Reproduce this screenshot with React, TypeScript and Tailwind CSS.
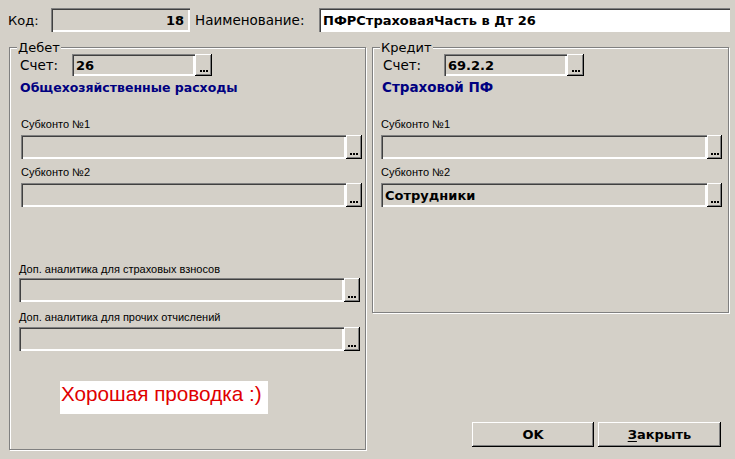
import React from "react";

const sunken =
  "shadow-[inset_1px_1px_0_#808080,inset_2px_2px_0_#404040,inset_-1px_-1px_0_#ffffff,inset_-2px_-2px_0_#ffffff]";
const raised =
  "shadow-[inset_-1px_-1px_0_#000000,inset_1px_1px_0_#ffffff,inset_-2px_-2px_0_#808080]";

function Dots() {
  return (
    <div className="flex gap-[1px]">
      <span className="block w-[2px] h-[2px] bg-black" />
      <span className="block w-[2px] h-[2px] bg-black" />
      <span className="block w-[2px] h-[2px] bg-black" />
    </div>
  );
}

function SelectField({
  fieldW,
  btnW,
  h,
  value,
}: {
  fieldW: number;
  btnW: number;
  h: number;
  value?: string;
}) {
  return (
    <div className="flex" style={{ height: h }}>
      <div
        className={`${sunken} bg-[#d4d0c8] h-full flex items-center pl-[4px] font-bold text-[13px] leading-[15px] text-black overflow-hidden whitespace-nowrap`}
        style={{ width: fieldW }}
      >
        {value}
      </div>
      <div
        className={`${raised} bg-[#d4d0c8] h-full flex items-end justify-center pb-[4px]`}
        style={{ width: btnW }}
      >
        <Dots />
      </div>
    </div>
  );
}

function SmallLabel({ children, cls }: { children: React.ReactNode; cls: string }) {
  return (
    <div
      className={`font-['Liberation_Sans',Arial,sans-serif] text-[11px] leading-[13px] text-black whitespace-nowrap ${cls}`}
    >
      {children}
    </div>
  );
}

function Legend({ children }: { children: React.ReactNode }) {
  return (
    <div className="absolute -top-[8px] left-[7px] bg-[#d4d0c8] px-[1px] text-[13px] leading-[15px] text-black">
      {children}
    </div>
  );
}

export default function App() {
  return (
    <div className="w-[735px] h-[459px] bg-[#d4d0c8] overflow-hidden font-['DejaVu_Sans',sans-serif] text-black">
      {/* top row */}
      <div className="flex items-center pl-[8px] pt-[8px]">
        <div className="w-[43px] text-[13px] leading-[15px]">Код:</div>
        <div
          className={`${sunken} w-[139px] h-[24px] bg-[#d4d0c8] flex items-center justify-end pr-[6px] font-bold text-[13px] leading-[15px]`}
        >
          18
        </div>
        <div className="ml-[5px] w-[124px] text-[13.5px] leading-[15px]">Наименование:</div>
        <div
          className={`${sunken} w-[411px] h-[24px] bg-white flex items-center pl-[4px] font-bold text-[13px] leading-[15px] whitespace-nowrap`}
        >
          ПФРСтраховаяЧасть в Дт 26
        </div>
      </div>

      {/* columns */}
      <div className="flex mt-[15px] pl-[9px]">
        {/* Дебет */}
        <div className="relative w-[357px] h-[403px] border border-[#808080] shadow-[1px_1px_0_#ffffff,inset_1px_1px_0_#ffffff] flex flex-col">
          <Legend>Дебет</Legend>
          <div className="mt-[6px] pl-[10px] flex items-center">
            <div className="w-[52px] text-[13.5px] leading-[15px]">Счет:</div>
            <SelectField fieldW={123} btnW={17} h={22} value="26" />
          </div>
          <div className="mt-[4px] pl-[10px] font-bold text-[12.5px] leading-[15px] text-[#000080] whitespace-nowrap">
            Общехозяйственные расходы
          </div>
          <SmallLabel cls="mt-[23px] pl-[11px]">Субконто №1</SmallLabel>
          <div className="mt-[4px] ml-[11px]">
            <SelectField fieldW={325} btnW={16} h={24} />
          </div>
          <SmallLabel cls="mt-[7px] pl-[11px]">Субконто №2</SmallLabel>
          <div className="mt-[4px] ml-[11px]">
            <SelectField fieldW={325} btnW={16} h={24} />
          </div>
          <SmallLabel cls="mt-[56px] pl-[9px]">Доп. аналитика для страховых взносов</SmallLabel>
          <div className="mt-[2px] ml-[9px]">
            <SelectField fieldW={325} btnW={16} h={24} />
          </div>
          <SmallLabel cls="mt-[9px] pl-[9px]">Доп. аналитика для прочих отчислений</SmallLabel>
          <div className="mt-[3px] ml-[9px]">
            <SelectField fieldW={325} btnW={16} h={24} />
          </div>
          <div className="mt-[30px] ml-[50px] w-[208px] h-[33px] bg-white pt-[1px] pl-[1px] font-['Liberation_Sans',Arial,sans-serif] text-[20.7px] leading-[23px] text-[#e00000] whitespace-nowrap">
            Хорошая проводка :)
          </div>
        </div>

        {/* Кредит */}
        <div className="ml-[6px] flex flex-col">
          <div className="relative w-[357px] h-[266px] border border-[#808080] shadow-[1px_1px_0_#ffffff,inset_1px_1px_0_#ffffff] flex flex-col">
            <Legend>Кредит</Legend>
            <div className="mt-[6px] pl-[10px] flex items-center">
              <div className="w-[61px] text-[13.5px] leading-[15px]">Счет:</div>
              <SelectField fieldW={123} btnW={17} h={22} value="69.2.2" />
            </div>
            <div className="mt-[4px] pl-[9px] font-bold text-[13.5px] leading-[15px] text-[#000080] whitespace-nowrap">
              Страховой ПФ
            </div>
            <SmallLabel cls="mt-[23px] pl-[8px]">Субконто №1</SmallLabel>
            <div className="mt-[4px] ml-[8px]">
              <SelectField fieldW={326} btnW={15} h={24} />
            </div>
            <SmallLabel cls="mt-[7px] pl-[8px]">Субконто №2</SmallLabel>
            <div className="mt-[4px] ml-[8px]">
              <SelectField fieldW={326} btnW={15} h={24} value="Сотрудники" />
            </div>
          </div>
          <div className="mt-[109px] ml-[100px] flex gap-[4px]">
            <div
              className={`${raised} w-[122px] h-[25px] bg-[#d4d0c8] flex items-center justify-center font-bold text-[13px] leading-[15px]`}
            >
              OK
            </div>
            <div
              className={`${raised} w-[123px] h-[25px] bg-[#d4d0c8] flex items-center justify-center font-bold text-[13px] leading-[15px]`}
            >
              <span className="underline underline-offset-2">З</span>акрыть
            </div>
          </div>
        </div>
      </div>
    </div>
  );
}
